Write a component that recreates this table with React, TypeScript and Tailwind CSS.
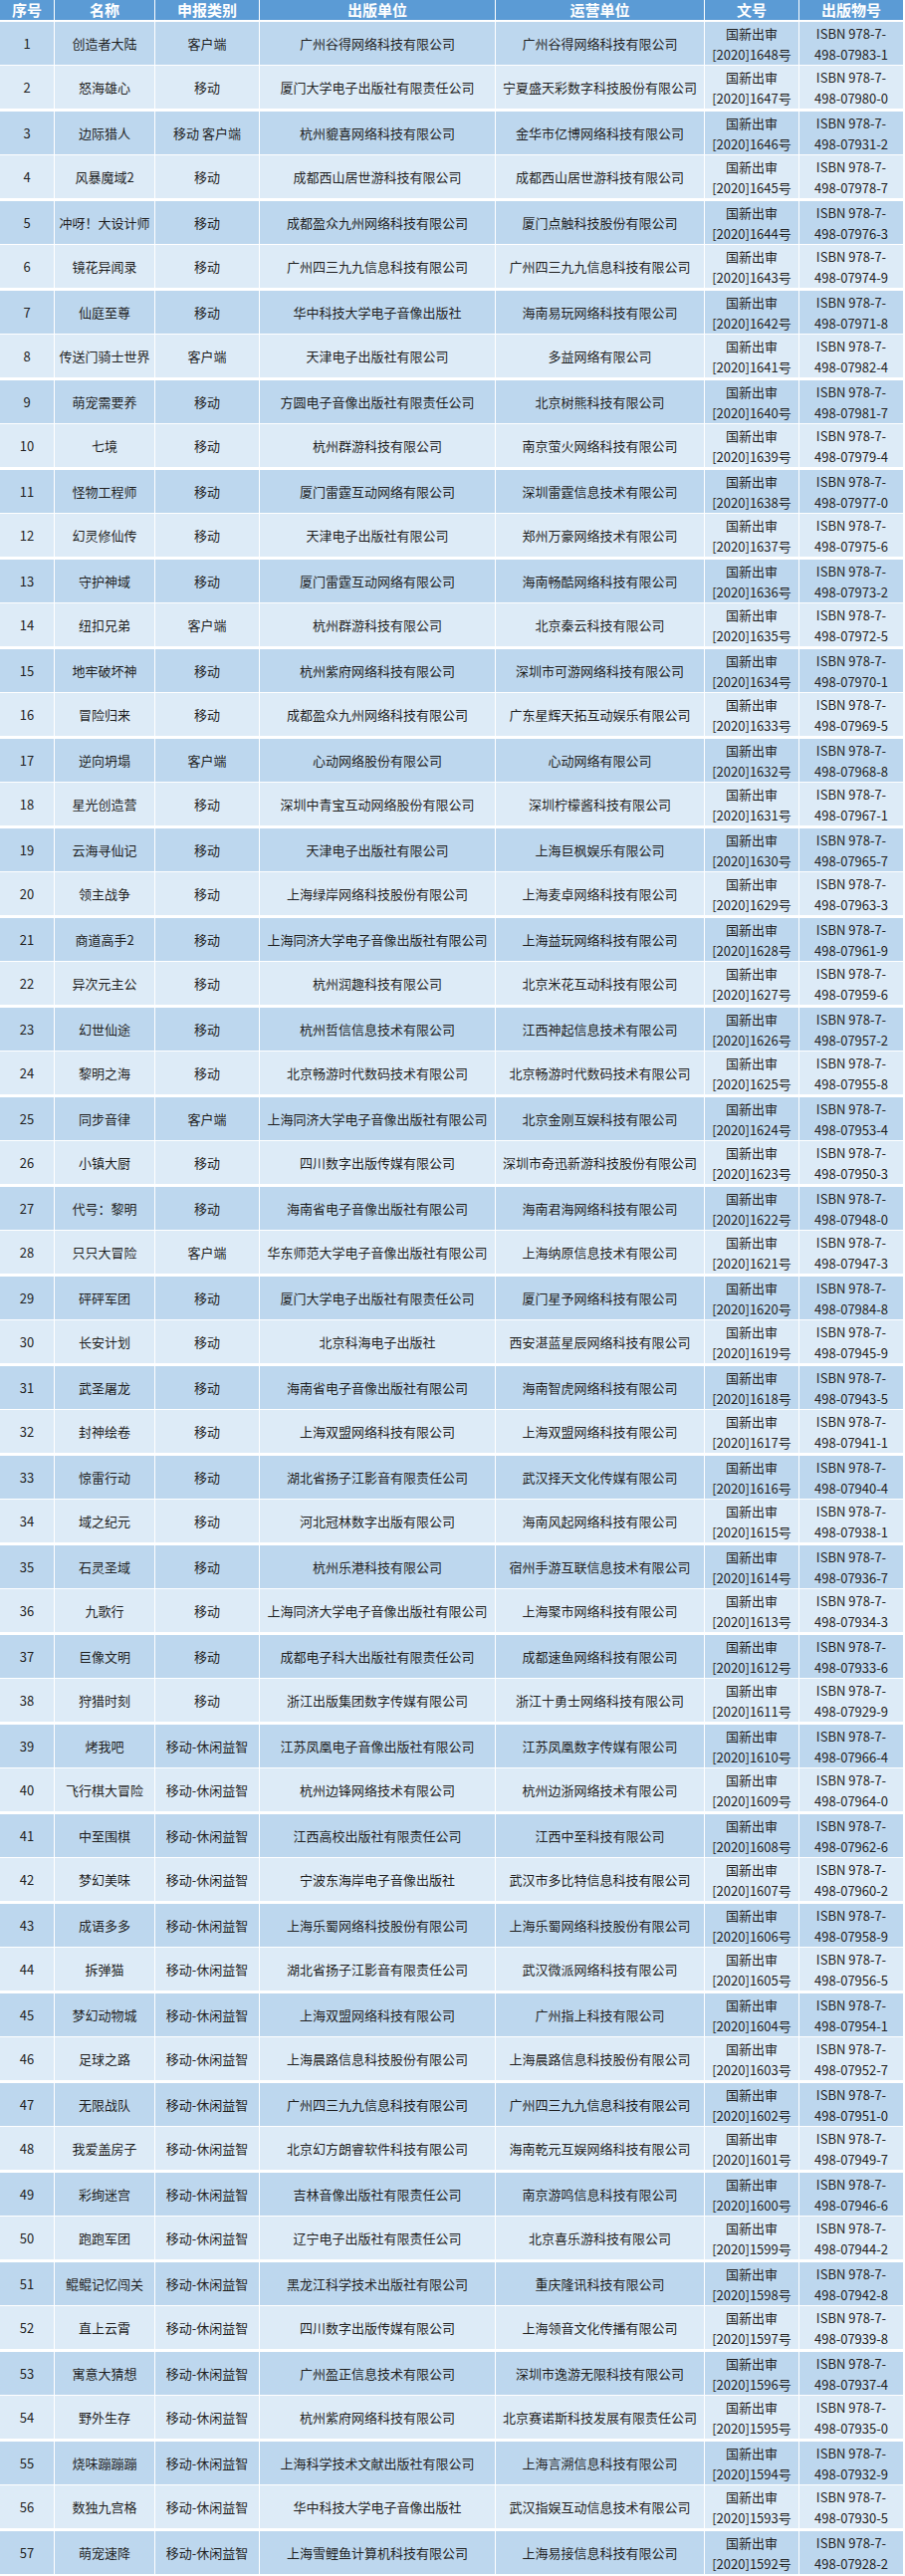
const rows: [string, string, string, string, string][] = [
  ['创造者大陆', '客户端', '广州谷得网络科技有限公司', '广州谷得网络科技有限公司', '07983-1'],
  ['怒海雄心', '移动', '厦门大学电子出版社有限责任公司', '宁夏盛天彩数字科技股份有限公司', '07980-0'],
  ['边际猎人', '移动 客户端', '杭州貔喜网络科技有限公司', '金华市亿博网络科技有限公司', '07931-2'],
  ['风暴魔域2', '移动', '成都西山居世游科技有限公司', '成都西山居世游科技有限公司', '07978-7'],
  ['冲呀！大设计师', '移动', '成都盈众九州网络科技有限公司', '厦门点触科技股份有限公司', '07976-3'],
  ['镜花异闻录', '移动', '广州四三九九信息科技有限公司', '广州四三九九信息科技有限公司', '07974-9'],
  ['仙庭至尊', '移动', '华中科技大学电子音像出版社', '海南易玩网络科技有限公司', '07971-8'],
  ['传送门骑士世界', '客户端', '天津电子出版社有限公司', '多益网络有限公司', '07982-4'],
  ['萌宠需要养', '移动', '方圆电子音像出版社有限责任公司', '北京树熊科技有限公司', '07981-7'],
  ['七境', '移动', '杭州群游科技有限公司', '南京萤火网络科技有限公司', '07979-4'],
  ['怪物工程师', '移动', '厦门雷霆互动网络有限公司', '深圳雷霆信息技术有限公司', '07977-0'],
  ['幻灵修仙传', '移动', '天津电子出版社有限公司', '郑州万豪网络技术有限公司', '07975-6'],
  ['守护神域', '移动', '厦门雷霆互动网络有限公司', '海南畅酷网络科技有限公司', '07973-2'],
  ['纽扣兄弟', '客户端', '杭州群游科技有限公司', '北京秦云科技有限公司', '07972-5'],
  ['地牢破坏神', '移动', '杭州紫府网络科技有限公司', '深圳市可游网络科技有限公司', '07970-1'],
  ['冒险归来', '移动', '成都盈众九州网络科技有限公司', '广东星辉天拓互动娱乐有限公司', '07969-5'],
  ['逆向坍塌', '客户端', '心动网络股份有限公司', '心动网络有限公司', '07968-8'],
  ['星光创造营', '移动', '深圳中青宝互动网络股份有限公司', '深圳柠檬酱科技有限公司', '07967-1'],
  ['云海寻仙记', '移动', '天津电子出版社有限公司', '上海巨枫娱乐有限公司', '07965-7'],
  ['领主战争', '移动', '上海绿岸网络科技股份有限公司', '上海麦卓网络科技有限公司', '07963-3'],
  ['商道高手2', '移动', '上海同济大学电子音像出版社有限公司', '上海益玩网络科技有限公司', '07961-9'],
  ['异次元主公', '移动', '杭州润趣科技有限公司', '北京米花互动科技有限公司', '07959-6'],
  ['幻世仙途', '移动', '杭州哲信信息技术有限公司', '江西神起信息技术有限公司', '07957-2'],
  ['黎明之海', '移动', '北京畅游时代数码技术有限公司', '北京畅游时代数码技术有限公司', '07955-8'],
  ['同步音律', '客户端', '上海同济大学电子音像出版社有限公司', '北京金刚互娱科技有限公司', '07953-4'],
  ['小镇大厨', '移动', '四川数字出版传媒有限公司', '深圳市奇迅新游科技股份有限公司', '07950-3'],
  ['代号：黎明', '移动', '海南省电子音像出版社有限公司', '海南君海网络科技有限公司', '07948-0'],
  ['只只大冒险', '客户端', '华东师范大学电子音像出版社有限公司', '上海纳原信息技术有限公司', '07947-3'],
  ['砰砰军团', '移动', '厦门大学电子出版社有限责任公司', '厦门星予网络科技有限公司', '07984-8'],
  ['长安计划', '移动', '北京科海电子出版社', '西安湛蓝星辰网络科技有限公司', '07945-9'],
  ['武圣屠龙', '移动', '海南省电子音像出版社有限公司', '海南智虎网络科技有限公司', '07943-5'],
  ['封神绘卷', '移动', '上海双盟网络科技有限公司', '上海双盟网络科技有限公司', '07941-1'],
  ['惊雷行动', '移动', '湖北省扬子江影音有限责任公司', '武汉择天文化传媒有限公司', '07940-4'],
  ['域之纪元', '移动', '河北冠林数字出版有限公司', '海南风起网络科技有限公司', '07938-1'],
  ['石灵圣域', '移动', '杭州乐港科技有限公司', '宿州手游互联信息技术有限公司', '07936-7'],
  ['九歌行', '移动', '上海同济大学电子音像出版社有限公司', '上海聚市网络科技有限公司', '07934-3'],
  ['巨像文明', '移动', '成都电子科大出版社有限责任公司', '成都速鱼网络科技有限公司', '07933-6'],
  ['狩猎时刻', '移动', '浙江出版集团数字传媒有限公司', '浙江十勇士网络科技有限公司', '07929-9'],
  ['烤我吧', '移动-休闲益智', '江苏凤凰电子音像出版社有限公司', '江苏凤凰数字传媒有限公司', '07966-4'],
  ['飞行棋大冒险', '移动-休闲益智', '杭州边锋网络技术有限公司', '杭州边浙网络技术有限公司', '07964-0'],
  ['中至围棋', '移动-休闲益智', '江西高校出版社有限责任公司', '江西中至科技有限公司', '07962-6'],
  ['梦幻美味', '移动-休闲益智', '宁波东海岸电子音像出版社', '武汉市多比特信息科技有限公司', '07960-2'],
  ['成语多多', '移动-休闲益智', '上海乐蜀网络科技股份有限公司', '上海乐蜀网络科技股份有限公司', '07958-9'],
  ['拆弹猫', '移动-休闲益智', '湖北省扬子江影音有限责任公司', '武汉微派网络科技有限公司', '07956-5'],
  ['梦幻动物城', '移动-休闲益智', '上海双盟网络科技有限公司', '广州指上科技有限公司', '07954-1'],
  ['足球之路', '移动-休闲益智', '上海晨路信息科技股份有限公司', '上海晨路信息科技股份有限公司', '07952-7'],
  ['无限战队', '移动-休闲益智', '广州四三九九信息科技有限公司', '广州四三九九信息科技有限公司', '07951-0'],
  ['我爱盖房子', '移动-休闲益智', '北京幻方朗睿软件科技有限公司', '海南乾元互娱网络科技有限公司', '07949-7'],
  ['彩绚迷宫', '移动-休闲益智', '吉林音像出版社有限责任公司', '南京游鸣信息科技有限公司', '07946-6'],
  ['跑跑军团', '移动-休闲益智', '辽宁电子出版社有限责任公司', '北京喜乐游科技有限公司', '07944-2'],
  ['鲲鲲记忆闯关', '移动-休闲益智', '黑龙江科学技术出版社有限公司', '重庆隆讯科技有限公司', '07942-8'],
  ['直上云霄', '移动-休闲益智', '四川数字出版传媒有限公司', '上海领音文化传播有限公司', '07939-8'],
  ['寓意大猜想', '移动-休闲益智', '广州盈正信息技术有限公司', '深圳市逸游无限科技有限公司', '07937-4'],
  ['野外生存', '移动-休闲益智', '杭州紫府网络科技有限公司', '北京赛诺斯科技发展有限责任公司', '07935-0'],
  ['烧味蹦蹦蹦', '移动-休闲益智', '上海科学技术文献出版社有限公司', '上海言溯信息科技有限公司', '07932-9'],
  ['数独九宫格', '移动-休闲益智', '华中科技大学电子音像出版社', '武汉指娱互动信息技术有限公司', '07930-5'],
  ['萌宠速降', '移动-休闲益智', '上海雪鲤鱼计算机科技有限公司', '上海易接信息科技有限公司', '07928-2'],
];

const headers = ['序号', '名称', '申报类别', '出版单位', '运营单位', '文号', '出版物号'];

export default function App() {
  return (
    <div className="w-[909px] bg-white text-[#1f1f1f] font-['Noto_Sans_CJK_SC',sans-serif]">
      <div className="w-[907px]">
        {/* HEADER */}
        <div className="grid grid-cols-[54px_100px_104px_236px_209px_94px_104px] gap-x-px border-b-2 border-white">
          {headers.map((h) => (
            <div key={h} className="h-[20px] bg-[#5b9bd5] flex items-center justify-center text-white font-bold text-[15px] leading-[20px]">
              {h}
            </div>
          ))}
        </div>

        {/* BODY ROWS */}
        {rows.map(([name, type, pub, op, isbn], i) => {
          const n = i + 1;
          const odd = n % 2 === 1;
          const bg = odd ? 'bg-[#bdd7ee]' : 'bg-[#ddebf7]';
          const cell = `${bg} h-[43px] flex flex-col items-center justify-center text-center text-[13px] leading-[21px] whitespace-nowrap`;
          return (
            <div
              key={n}
              className={`grid grid-cols-[54px_100px_104px_236px_209px_94px_104px] gap-x-px border-white ${odd ? 'border-b' : 'border-b-[3px]'}`}
            >
              <div className={cell}>{n}</div>
              <div className={cell}>{name}</div>
              <div className={cell}>{type}</div>
              <div className={cell}>{pub}</div>
              <div className={cell}>{op}</div>
              <div className={cell}>
                <span>国新出审</span>
                <span>[2020]{1649 - n}号</span>
              </div>
              <div className={cell}>
                <span>ISBN 978-7-</span>
                <span>498-{isbn}</span>
              </div>
            </div>
          );
        })}
      </div>
    </div>
  );
}
